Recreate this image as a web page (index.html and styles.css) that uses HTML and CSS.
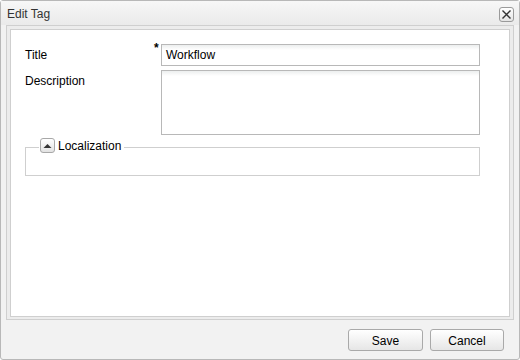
FILE: index.html
```html
<!DOCTYPE html>
<html>
<head>
<meta charset="utf-8">
<title>Edit Tag</title>
<link rel="stylesheet" href="styles.css">
</head>
<body>
<div class="window">
  <div class="header">
    <span class="title">Edit Tag</span>
    <span class="close">
      <svg width="11" height="11" viewBox="0 0 11 11"><path d="M1.5 1.5 L9.5 9.5 M9.5 1.5 L1.5 9.5" stroke="#333" stroke-width="1.4" fill="none"/></svg>
    </span>
  </div>
  <div class="frame">
    <div class="panel">
      <div class="row">
        <label class="label">Title</label>
        <span class="req">*</span>
        <div class="input">Workflow</div>
      </div>
      <div class="row">
        <label class="label">Description</label>
        <span class="req"></span>
        <div class="textarea"></div>
      </div>
      <div class="fieldset">
        <div class="legend">
          <span class="toggle"><svg width="9" height="6" viewBox="0 0 9 6"><path d="M0.5 5 L4.5 1 L8.5 5 Z" fill="#333"/></svg></span>
          <span class="legend-text">Localization</span>
        </div>
      </div>
    </div>
  </div>
  <div class="footer">
    <button class="btn btn-save">Save</button>
    <button class="btn btn-cancel">Cancel</button>
  </div>
</div>
</body>
</html>
```
FILE: styles.css
```css
html, body {
  margin: 0;
  padding: 0;
  background: #ffffff;
}
.window {
  width: 520px;
  height: 360px;
  box-sizing: border-box;
  border: 1px solid #b8b8b8;
  border-radius: 3px;
  background: #f2f2f2;
  font-family: "Liberation Sans", Arial, sans-serif;
  font-size: 12px;
  color: #000;
  display: flex;
  flex-direction: column;
}
.header {
  height: 24px;
  display: flex;
  align-items: center;
  justify-content: space-between;
  padding: 0 5px 0 6px;
  background: linear-gradient(#f7f7f7, #eaeaea);
  box-sizing: border-box;
}
.title {
  color: #333;
  font-size: 12px;
  padding-top: 1px;
}
.close {
  width: 13px;
  height: 13px;
  border: 1px solid #9a9a9a;
  border-radius: 3px;
  background: linear-gradient(#ffffff, #e4e4e4);
  display: flex;
  align-items: center;
  justify-content: center;
  margin-top: 2px;
}
.frame {
  margin: 0 5px;
  height: 295px;
  box-sizing: border-box;
  border: 1px solid #cfcfcf;
  background: #ececec;
  padding: 3px 3px 2px 3px;
}
.panel {
  height: 100%;
  box-sizing: border-box;
  border: 1px solid #cfcfcf;
  background: #ffffff;
  padding: 14px 29px 0 14px;
}
.row {
  display: flex;
  align-items: flex-start;
  margin-bottom: 4px;
}
.label {
  width: 129px;
  padding-top: 4px;
  line-height: 14px;
}
.req {
  width: 7px;
  font-size: 12px;
  line-height: 8px;
  color: #000;
  font-weight: bold;
  margin-top: 0px;
}
.input, .textarea {
  flex: 1;
  box-sizing: border-box;
  border: 1px solid #b8b8b8;
  background: linear-gradient(#eceeee 0px, #ffffff 5px, #ffffff);
}
.input {
  height: 22px;
  line-height: 21px;
  padding-left: 4px;
  color: #000;
}
.textarea {
  height: 65px;
}
.fieldset {
  margin-top: 12px;
  height: 29px;
  box-sizing: border-box;
  border: 1px solid #cfcfcf;
  position: relative;
}
.legend {
  position: absolute;
  top: -10px;
  left: 13px;
  display: flex;
  align-items: center;
  background: #fff;
  padding: 0 3px 0 1px;
}
.toggle {
  width: 13px;
  height: 13px;
  border: 1px solid #a8a8a8;
  border-radius: 3px;
  background: linear-gradient(#ffffff, #e2e2e2);
  display: flex;
  align-items: center;
  justify-content: center;
  margin-right: 3px;
}
.legend-text {
  color: #000;
  line-height: 14px;
}
.footer {
  flex: 1;
  display: flex;
  justify-content: flex-end;
  align-items: flex-start;
  gap: 7px;
  padding: 9px 15px 0 0;
}
.btn {
  font-family: "Liberation Sans", Arial, sans-serif;
  font-size: 12px;
  color: #000;
  height: 22px;
  border: 1px solid #a9a9a9;
  border-radius: 3px;
  background: linear-gradient(#ffffff, #e6e6e6);
  padding: 1px 0 0 0;
  margin: 0;
}
.btn-save {
  width: 75px;
}
.btn-cancel {
  width: 74px;
}
```
